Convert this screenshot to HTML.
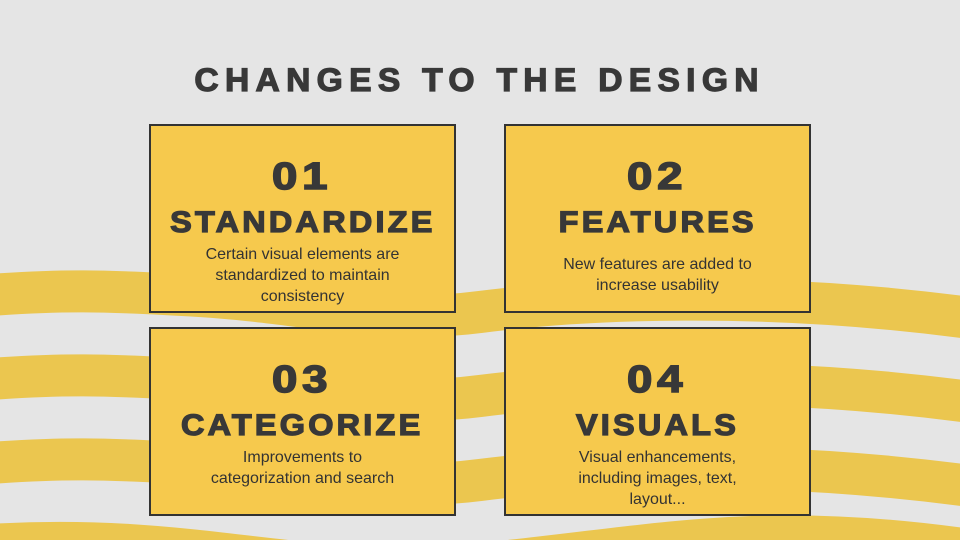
<!DOCTYPE html>
<html><head><meta charset="utf-8"><style>
html,body{margin:0;width:960px;height:540px;overflow:hidden}
body{background:#e5e5e5;position:relative;font-family:"Liberation Sans",sans-serif;color:#383838}
svg{position:absolute;left:0;top:0}
.t{position:absolute;left:0;width:960px;text-align:center;top:62px;font-weight:bold;font-size:32px;letter-spacing:6px;-webkit-text-stroke:1.2px #383838}
.t span,.h span,.n span{display:inline-block;transform:scaleX(1.05)}
.c{position:absolute;width:307px;height:189px;background:#f6c94d;border:2px solid #333;box-sizing:border-box;text-align:center}
.n{position:absolute;top:30px;left:0;right:0;font-weight:bold;font-size:38px;letter-spacing:4px;-webkit-text-stroke:1.5px #383838}
.n span{transform:scaleX(1.2)}
.h{position:absolute;top:80px;left:0;right:0;font-weight:bold;font-size:30px;letter-spacing:3px;-webkit-text-stroke:1.3px #383838}
.h span{transform:scaleX(1.08)}
.p{position:absolute;top:118px;left:50%;transform:translateX(-50%);width:220px;font-size:16px;line-height:21px;color:#333}
</style></head><body>
<svg width="960" height="540" fill="none" stroke="#ebc64f" stroke-width="42">
<path d="M-10,295 C60,290 100,290 200,296 S380,325 480,312 S760,290 970,318"/>
<path d="M-10,379 C60,374 100,374 200,380 S380,409 480,396 S760,374 970,402"/>
<path d="M-10,463 C60,458 100,458 200,464 S380,493 480,480 S760,458 970,486"/>
<path d="M-10,545 C200,532 300,582 480,564 S760,520 970,550"/>
</svg>
<div class="t"><span>CHANGES TO THE DESIGN</span></div>
<div class="c" style="left:149px;top:124px"><div class="n"><span>01</span></div><div class="h"><span>STANDARDIZE</span></div><div class="p" style="width:230px">Certain visual elements are standardized to maintain consistency</div></div>
<div class="c" style="left:504px;top:124px"><div class="n"><span>02</span></div><div class="h"><span>FEATURES</span></div><div class="p" style="top:128px;width:215px">New features are added to increase usability</div></div>
<div class="c" style="left:149px;top:327px"><div class="n"><span>03</span></div><div class="h"><span>CATEGORIZE</span></div><div class="p" style="width:215px">Improvements to categorization and search</div></div>
<div class="c" style="left:504px;top:327px"><div class="n"><span>04</span></div><div class="h"><span>VISUALS</span></div><div class="p" style="width:190px">Visual enhancements, including images, text, layout...</div></div>
</body></html>
